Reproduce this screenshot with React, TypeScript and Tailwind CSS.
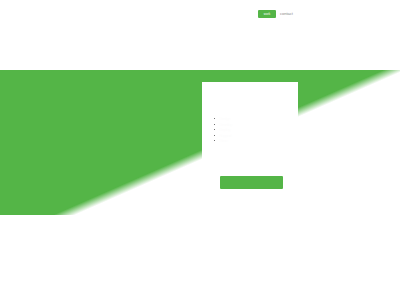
export default function App() {
  const items = ["Design", "Develop", "Deploy", "Support", "Grow"];
  return (
    <div className="w-[400px] h-[300px] bg-white overflow-hidden font-['Liberation_Sans',sans-serif]">
      <header className="h-[70px] flex items-start pt-[10px] pl-[258px] gap-[4px]">
        <a className="w-[18px] h-[8px] bg-[#54b547] rounded-[1px] text-white text-[3px] leading-[8px] text-center">
          work
        </a>
        <a className="text-[#888] text-[4px] leading-[8px]">contact</a>
      </header>
      <section className="h-[145px] pl-[202px] pt-[12px] bg-[linear-gradient(156.3deg,#54b547_52.5%,#ffffff_55.5%)]">
        <div className="w-[96px] h-[125px] bg-white flex flex-col pt-[35px] px-[12px]">
          <ul className="list-disc list-inside text-[3.5px] leading-[5.5px]">
            {items.map((it) => (
              <li key={it} className="text-[#fdfdfd] marker:text-[#444]">
                {it}
              </li>
            ))}
          </ul>
          <button className="mt-[31px] ml-[6px] w-[63px] h-[13px] bg-[#54b547] rounded-[1px]" />
        </div>
      </section>
    </div>
  );
}
